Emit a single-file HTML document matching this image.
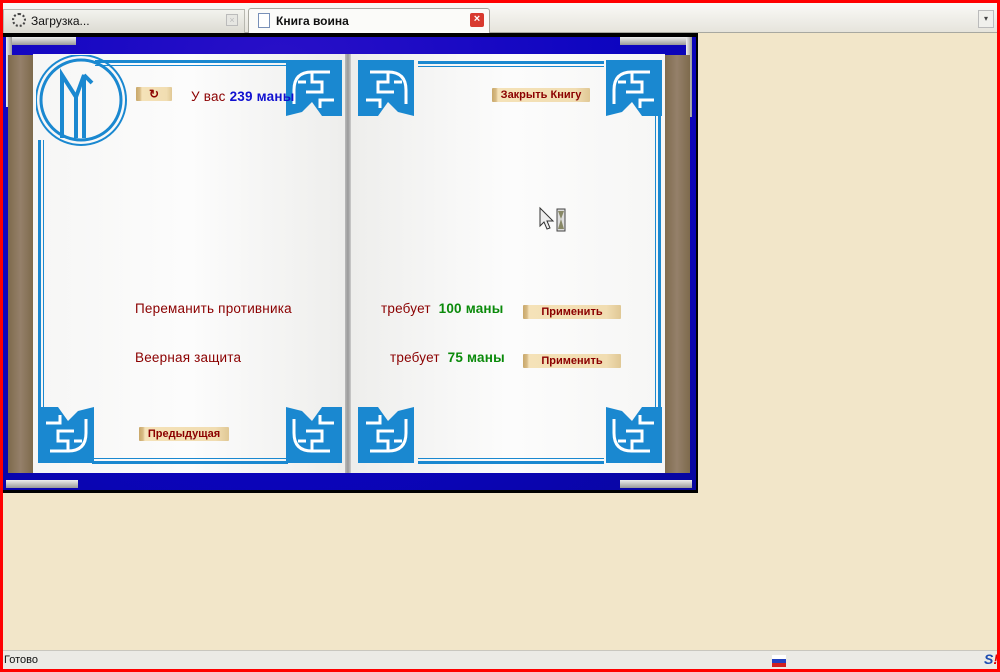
<!DOCTYPE html>
<html><head><meta charset="utf-8"><style>
*{margin:0;padding:0;box-sizing:border-box}
body{width:1000px;height:672px;overflow:hidden;background:#f2e6c9;font-family:"Liberation Sans","DejaVu Sans",sans-serif;position:relative}
.a{position:absolute}
.btn{position:absolute;height:14px;background:linear-gradient(90deg,#c9a86a 0,#d8bb85 4px,#f5e2b8 6px,#f1ddb2 85%,#e0c895 100%);border-radius:1px;font:bold 11px "Liberation Sans",sans-serif;color:#8b0000;line-height:14px;text-align:center}
.txt{position:absolute;font-size:13.5px;color:#8b0000;letter-spacing:0.2px}
.g{color:#0a8a0a;font-weight:bold}
.bl{color:#1010d0;font-weight:bold}
</style></head><body>
<div class="a" style="left:0;top:0;width:1000px;height:672px;border:3px solid #f00;z-index:50;pointer-events:none"></div>
<div class="a" style="left:3px;top:3px;width:994px;height:30px;background:linear-gradient(#fafaf7,#e6e4dc);border-bottom:1px solid #a8a8a0"></div>
<div class="a" style="left:3px;top:9px;width:242px;height:24px;background:linear-gradient(#f3f3ee,#dcdad2);border:1px solid #b8b8b0;border-bottom:none"></div>
<div class="a" style="left:12px;top:13px;width:14px;height:14px;border-radius:50%;border:2px dotted #444"></div>
<div class="a" style="left:31px;top:14px;font-size:12px;color:#111">Загрузка...</div>
<div class="a" style="left:226px;top:14px;width:12px;height:12px;border:1px solid #bbb;background:#e6e6e2;color:#bbb;font-size:9px;text-align:center;line-height:10px">×</div>
<div class="a" style="left:248px;top:8px;width:242px;height:26px;background:#fbfbf9;border:1px solid #a8a8a0;border-bottom:none;border-radius:3px 3px 0 0"></div>
<div class="a" style="left:258px;top:13px;width:12px;height:15px;background:#fff;border:1px solid #7890b8"></div>
<div class="a" style="left:276px;top:14px;font-size:12px;font-weight:bold;color:#111">Книга воина</div>
<div class="a" style="left:470px;top:13px;width:14px;height:14px;border-radius:2px;background:#d83a30;color:#fff;font-size:11px;text-align:center;line-height:13px;font-weight:bold">×</div>
<div class="a" style="left:978px;top:10px;width:16px;height:18px;border:1px solid #bbb;background:#f0f0ec;font-size:8px;text-align:center;line-height:16px;color:#444">▾</div>

<div class="a" style="left:3px;top:33px;width:695px;height:460px;background:#000"></div>
<div class="a" style="left:3px;top:37px;width:693px;height:453px;background:radial-gradient(ellipse at 40% 10%,#2a10c8,#0c04c0 60%,#0806a0)"></div>
<div class="a" style="left:6px;top:37px;width:70px;height:8px;background:linear-gradient(#eee,#999)"></div>
<div class="a" style="left:6px;top:37px;width:6px;height:70px;background:linear-gradient(90deg,#eee,#999)"></div>
<div class="a" style="left:620px;top:37px;width:72px;height:8px;background:linear-gradient(#eee,#999)"></div>
<div class="a" style="left:686px;top:37px;width:6px;height:80px;background:linear-gradient(90deg,#eee,#999)"></div>
<div class="a" style="left:6px;top:480px;width:72px;height:8px;background:linear-gradient(#eee,#999)"></div>
<div class="a" style="left:620px;top:480px;width:72px;height:8px;background:linear-gradient(#eee,#999)"></div>
<div class="a" style="left:8px;top:55px;width:25px;height:418px;background:linear-gradient(90deg,#7d6a4c,#95806a 50%,#7d6a4c)"></div>
<div class="a" style="left:664px;top:55px;width:26px;height:418px;background:linear-gradient(90deg,#7d6a4c,#95806a 50%,#7d6a4c)"></div>
<div class="a" style="left:33px;top:54px;width:312px;height:419px;background:linear-gradient(90deg,#f6f6f5,#fcfcfc 50%,#eeeeec)"></div>
<div class="a" style="left:345px;top:54px;width:6px;height:419px;background:linear-gradient(90deg,#bbb,#999,#ccc)"></div>
<div class="a" style="left:351px;top:54px;width:314px;height:419px;background:linear-gradient(90deg,#eeeeec,#fcfcfc 50%,#f6f6f5)"></div>

<div class="a" style="left:95px;top:60px;width:195px;height:3px;background:#1a88d0"></div>
<div class="a" style="left:95px;top:65px;width:195px;height:1px;background:#1a88d0"></div>
<div class="a" style="left:38px;top:140px;width:3px;height:275px;background:#1a88d0"></div>
<div class="a" style="left:43px;top:140px;width:1px;height:275px;background:#1a88d0"></div>
<div class="a" style="left:92px;top:458px;width:196px;height:1px;background:#1a88d0"></div>
<div class="a" style="left:92px;top:461px;width:196px;height:3px;background:#1a88d0"></div>
<div class="a" style="left:418px;top:61px;width:186px;height:3px;background:#1a88d0"></div>
<div class="a" style="left:418px;top:66px;width:186px;height:1px;background:#1a88d0"></div>
<div class="a" style="left:655px;top:115px;width:1px;height:295px;background:#1a88d0"></div>
<div class="a" style="left:658px;top:115px;width:3px;height:295px;background:#1a88d0"></div>
<div class="a" style="left:418px;top:458px;width:186px;height:1px;background:#1a88d0"></div>
<div class="a" style="left:418px;top:461px;width:186px;height:3px;background:#1a88d0"></div>

<svg class="a" style="left:36px;top:55px" width="95" height="100" viewBox="0 0 95 100">
<circle cx="45" cy="45" r="40" fill="none" stroke="#1a88d0" stroke-width="3"/>
<circle cx="45" cy="45" r="45" fill="none" stroke="#1a88d0" stroke-width="2"/>
<g stroke="#1a88d0" stroke-width="4" fill="none">
<path d="M26 83 V20 L40 42 L48 20 V83"/><path d="M40 42 V83"/><path d="M48 20 L56 28"/></g>
</svg>

<svg width="0" height="0" style="position:absolute"><defs>
<g id="orn"><path d="M0 0 H56 V56 L40 52 L30 42 L20 56 H0 Z" fill="#1a88d0"/>
<g fill="none" stroke="#fff" stroke-width="3"><path d="M12 12 H30 V22 H20 V32 H36"/><path d="M30 12 Q48 12 48 30 V44"/><path d="M8 40 H22 V48"/><path d="M36 22 H44"/></g></g></defs></svg>
<svg class="a" style="left:286px;top:60px" width="56" height="56"><use href="#orn" transform="translate(56,0) scale(-1,1)"/></svg>
<svg class="a" style="left:358px;top:60px" width="56" height="56"><use href="#orn"/></svg>
<svg class="a" style="left:606px;top:60px" width="56" height="56"><use href="#orn" transform="translate(56,0) scale(-1,1)"/></svg>
<svg class="a" style="left:38px;top:407px" width="56" height="56"><use href="#orn" transform="translate(0,56) scale(1,-1)"/></svg>
<svg class="a" style="left:286px;top:407px" width="56" height="56"><use href="#orn" transform="translate(56,56) scale(-1,-1)"/></svg>
<svg class="a" style="left:358px;top:407px" width="56" height="56"><use href="#orn" transform="translate(0,56) scale(1,-1)"/></svg>
<svg class="a" style="left:606px;top:407px" width="56" height="56"><use href="#orn" transform="translate(56,56) scale(-1,-1)"/></svg>

<div class="btn" style="left:136px;top:87px;width:36px;font-size:12px">↻</div>
<div class="txt" style="left:191px;top:89px">У вас <span class="bl">239 маны</span></div>
<div class="btn" style="left:492px;top:88px;width:98px">Закрыть Книгу</div>
<div class="txt" style="left:135px;top:301px">Переманить противника</div>
<div class="txt" style="left:381px;top:301px">требует <span class="g">&nbsp;100 маны</span></div>
<div class="btn" style="left:523px;top:305px;width:98px">Применить</div>
<div class="txt" style="left:135px;top:350px">Веерная защита</div>
<div class="txt" style="left:390px;top:350px">требует <span class="g">&nbsp;75 маны</span></div>
<div class="btn" style="left:523px;top:354px;width:98px">Применить</div>
<div class="btn" style="left:139px;top:427px;width:90px">Предыдущая</div>
<svg class="a" style="left:538px;top:206px" width="32" height="28"><path d="M2 2 V20 L6 16 L9 23 L12 22 L9 15 H15 Z" fill="#eee" stroke="#333"/><rect x="19" y="3" width="8" height="22" fill="#ddd" stroke="#444"/><path d="M20 5 H26 L23 13 L26 23 H20 L23 13 Z" fill="#886"/></svg>

<div class="a" style="left:3px;top:650px;width:994px;height:19px;background:#ebeae5;border-top:1px solid #c8c6be"></div>
<div class="a" style="left:4px;top:654px;font-size:11px;color:#111">Готово</div>
<div class="a" style="left:772px;top:655px;width:14px;height:12px;background:linear-gradient(#fff 33%,#2040c0 33% 66%,#d02020 66%)"></div>
<div class="a" style="left:984px;top:651px;font:bold italic 14px 'Liberation Sans',sans-serif;color:#1a4ab0">S<span style="color:#d00">!</span></div>
</body></html>
